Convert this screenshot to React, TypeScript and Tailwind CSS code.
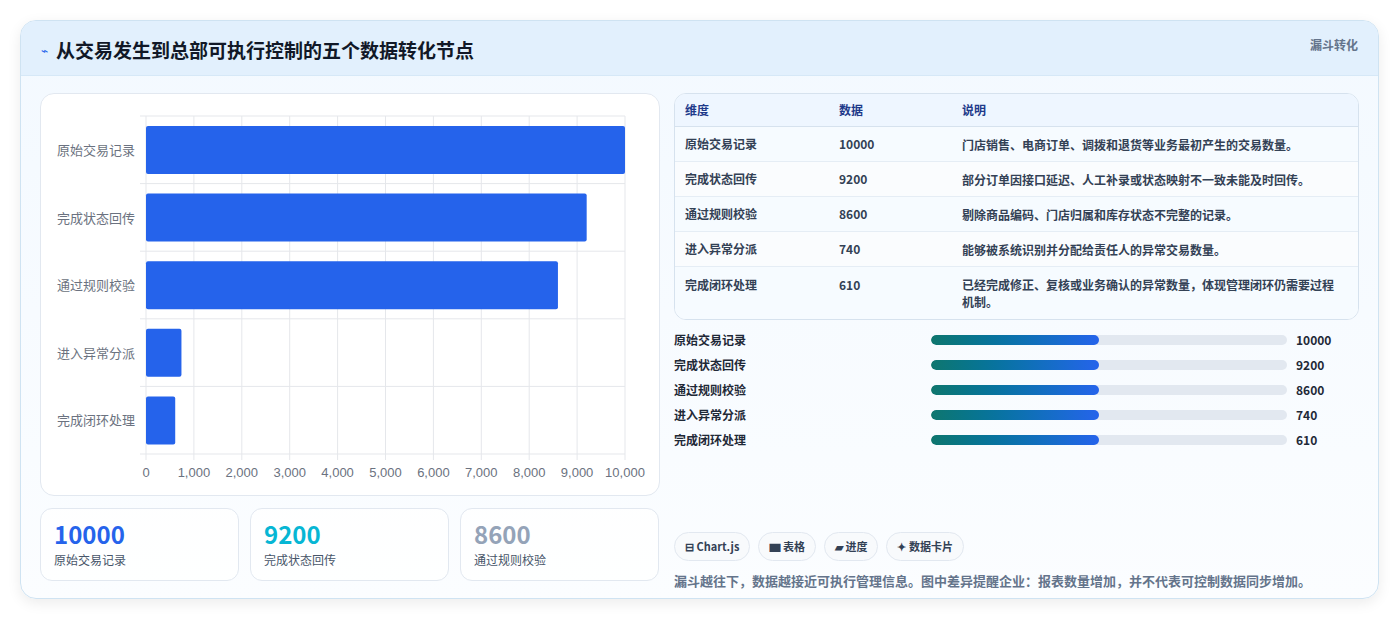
import React from "react";

const rows = [
  ["原始交易记录", 10000, "门店销售、电商订单、调拨和退货等业务最初产生的交易数量。"],
  ["完成状态回传", 9200, "部分订单因接口延迟、人工补录或状态映射不一致未能及时回传。"],
  ["通过规则校验", 8600, "剔除商品编码、门店归属和库存状态不完整的记录。"],
  ["进入异常分派", 740, "能够被系统识别并分配给责任人的异常交易数量。"],
  ["完成闭环处理", 610, "已经完成修正、复核或业务确认的异常数量，体现管理闭环仍需要过程机制。"],
] as const;

function Chart() {
  const x0 = 105, w = 479, y0 = 22, band = 67.6;
  return (
    <svg width="619" height="402" className="block">
      {Array.from({ length: 11 }).map((_, i) => (
        <g key={i}>
          <line x1={x0 + (w * i) / 10} x2={x0 + (w * i) / 10} y1={y0} y2={y0 + band * 5 + 6} stroke="#e5e7eb" />
          <text x={x0 + (w * i) / 10} y={383} textAnchor="middle" fontSize="13" fill="#6b7280" fontFamily="Liberation Sans, sans-serif">
            {(i * 1000).toLocaleString("en-US")}
          </text>
        </g>
      ))}
      {Array.from({ length: 6 }).map((_, i) => (
        <line key={i} x1={x0 - 6} x2={x0 + w} y1={y0 + band * i} y2={y0 + band * i} stroke="#e5e7eb" />
      ))}
      {rows.map((r, i) => (
        <g key={i}>
          <rect x={x0} y={y0 + band * i + 10} width={(w * r[1]) / 10000} height={48} fill="#2563eb" rx="2" />
          <text x={x0 - 11} y={y0 + band * i + 39} textAnchor="end" fontSize="13" fill="#6b7280" fontFamily="Noto Sans CJK SC, sans-serif">
            {r[0]}
          </text>
        </g>
      ))}
    </svg>
  );
}

export default function App() {
  return (
    <div className="w-[1399px] h-[621px] bg-white pt-[20px] px-[20px]" style={{ fontFamily: '"Noto Sans CJK SC", "Noto Sans", sans-serif' }}>
      <div className="w-[1359px] h-[579px] rounded-[16px] border border-[#cfe3f2] bg-gradient-to-b from-[#f3f9ff] to-[#fbfdff] shadow-[0_4px_14px_rgba(0,0,0,0.08)] overflow-hidden">
        <div className="h-[55px] bg-[#e2f0fd] border-b border-[#d6e8f7] flex items-start justify-between px-[20px]">
          <div className="flex items-center gap-[8px] mt-[15px]">
            <span className="text-[#2563eb] text-[12px]">⌁</span>
            <span className="text-[19px] font-bold text-[#111827]">从交易发生到总部可执行控制的五个数据转化节点</span>
          </div>
          <span className="mt-[15px] text-[12px] font-bold text-[#64748b]">漏斗转化</span>
        </div>
        <div className="flex gap-[14px] px-[19px] pt-[17px]">
          <div className="w-[620px] flex flex-col gap-[12px]">
            <div className="h-[403px] rounded-[14px] border border-[#e2e8f0] bg-white"><Chart /></div>
            <div className="flex gap-[11px]">
              {[["10000", "text-[#2563eb]", "原始交易记录"], ["9200", "text-[#06b6d4]", "完成状态回传"], ["8600", "text-[#94a3b8]", "通过规则校验"]].map(([v, c, l]) => (
                <div key={v} className="w-[199px] h-[73px] rounded-[12px] border border-[#e2e8f0] bg-white/70 px-[13px] pt-[10px]">
                  <div className={`text-[24px] font-bold leading-[30px] ${c}`}>{v}</div>
                  <div className="text-[12px] text-[#475569] mt-[2px]">{l}</div>
                </div>
              ))}
            </div>
          </div>
          <div className="w-[686px] flex flex-col">
            <div className="rounded-[12px] border border-[#d6e2ee] overflow-hidden text-[12px] bg-white">
              <div className="flex h-[33px] items-center bg-[#eef6ff] border-b border-[#d6e2ee] font-bold text-[#1e3a8a]">
                <div className="w-[164px] pl-[10px]">维度</div><div className="w-[123px]">数据</div><div>说明</div>
              </div>
              {rows.map((r, i) => (
                <div key={i} className={`flex ${i === 4 ? "py-[9px]" : "h-[35px] items-center"} border-b last:border-b-0 border-[#e5edf5] font-bold text-[#334155] ${i % 2 ? "bg-[#fafcfe]" : "bg-[#f6fbff]"}`}>
                  <div className="w-[164px] pl-[10px]">{r[0]}</div>
                  <div className="w-[123px]">{r[1]}</div>
                  <div className="w-[380px] leading-[17px]">{r[2]}</div>
                </div>
              ))}
            </div>
            <div className="flex flex-col gap-[7px] mt-[11px]">
              {rows.map((r, i) => (
                <div key={i} className="flex items-center h-[18px] text-[12px] font-bold text-[#1f2937]">
                  <div className="w-[257px]">{r[0]}</div>
                  <div className="w-[356px] h-[10px] rounded-full bg-[#e2e8f0] overflow-hidden">
                    <div className="w-[168px] h-full rounded-full bg-gradient-to-r from-[#0f766e] to-[#2563eb]" />
                  </div>
                  <div className="ml-[9px]">{r[1]}</div>
                </div>
              ))}
            </div>
            <div className="flex gap-[8px] mt-[83px]">
              {["⊟ Chart.js", "▆ 表格", "▰ 进度", "✦ 数据卡片"].map(t => (
                <span key={t} className="h-[29px] px-[10px] flex items-center rounded-full border border-[#e2e8f0] bg-[#f8fafc] text-[11px] font-bold text-[#334155]">{t}</span>
              ))}
            </div>
            <div className="mt-[10px] text-[13px] font-bold text-[#64748b]">漏斗越往下，数据越接近可执行管理信息。图中差异提醒企业：报表数量增加，并不代表可控制数据同步增加。</div>
          </div>
        </div>
      </div>
    </div>
  );
}
